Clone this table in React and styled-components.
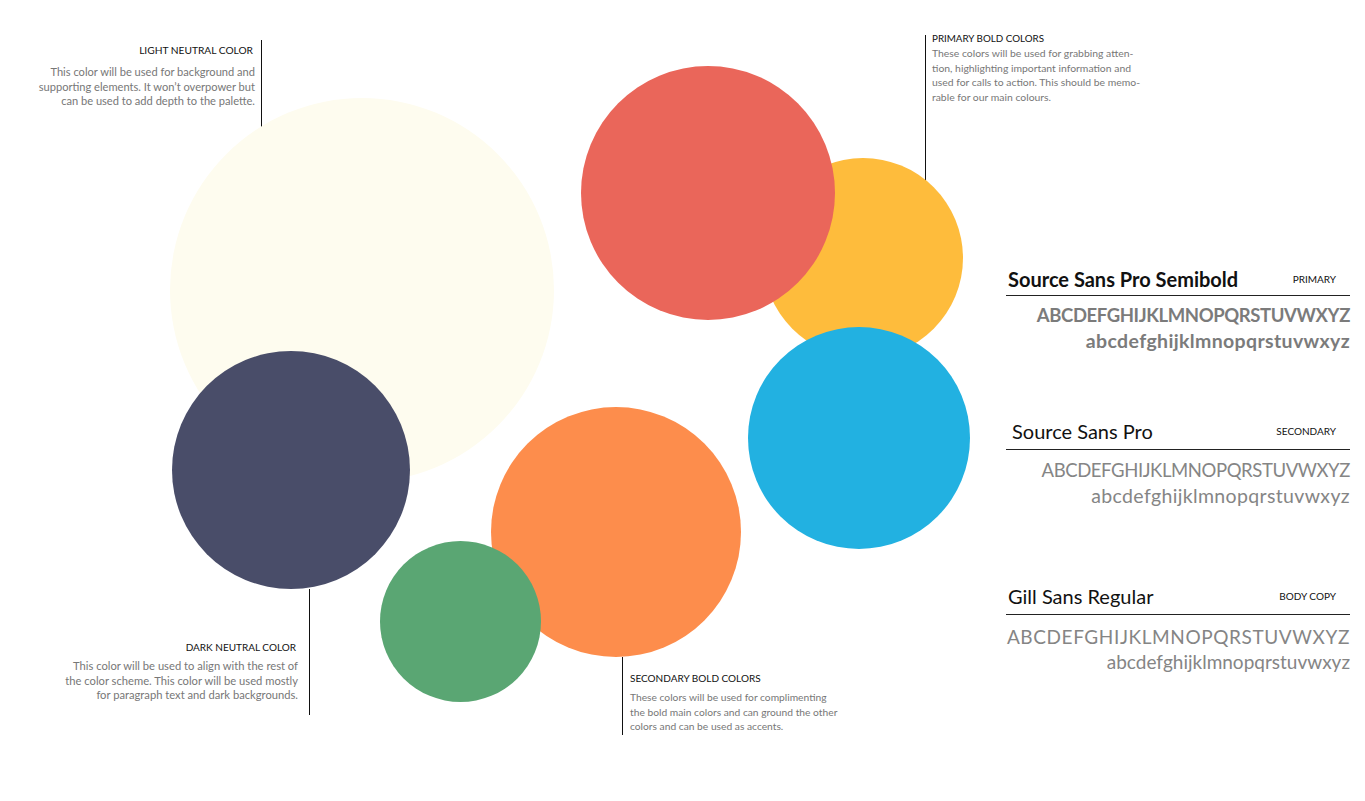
import React from 'react';
import styled, { createGlobalStyle } from 'styled-components';

const GlobalStyle = createGlobalStyle`
  html, body {
    margin: 0;
    padding: 0;
    background: #ffffff;
  }
  body {
    font-family: Lato, 'Liberation Sans', sans-serif;
  }
`;

const circles = [
  { name: 'cream', x: 170, y: 98, d: 384, c: '#fefcef', z: 1 },
  { name: 'navy', x: 172, y: 351, d: 238, c: '#494d69', z: 2 },
  { name: 'yellow', x: 763, y: 158, d: 200, c: '#febc3c', z: 1 },
  { name: 'red', x: 581, y: 66, d: 254, c: '#ea665a', z: 2 },
  { name: 'blue', x: 748, y: 327, d: 222, c: '#22b1e1', z: 3 },
  { name: 'orange', x: 491, y: 407, d: 250, c: '#fd8d4c', z: 1 },
  { name: 'green', x: 380, y: 541, d: 161, c: '#5aa673', z: 2 },
];

// callouts sit on the canvas next to the swatch they describe
const callouts = [
  {
    title: 'LIGHT NEUTRAL COLOR',
    side: 'right',
    x: 20,
    y: 40,
    w: 242,
    h: 87,
    pad: 4,
    gap: 9,
    size: 11.1,
    titleSize: 10.2,
    inset: 6,
    lines: [
      'This color will be used for background and',
      'supporting elements. It won\u2019t overpower but',
      'can be used to add depth to the palette.',
    ],
  },
  {
    title: 'DARK NEUTRAL COLOR',
    side: 'right',
    x: 30,
    y: 589,
    w: 280,
    h: 126,
    pad: 52,
    gap: 6,
    size: 11.2,
    titleSize: 10,
    inset: 11,
    lines: [
      'This color will be used to align with the rest of',
      'the color scheme. This color will be used mostly',
      'for paragraph text and dark backgrounds.',
    ],
  },
  {
    title: 'PRIMARY BOLD COLORS',
    side: 'left',
    x: 925,
    y: 35,
    w: 250,
    h: 148,
    pad: -3,
    gap: 2,
    size: 10.4,
    titleSize: 9.8,
    inset: 6,
    lines: [
      'These colors will be used for grabbing atten-',
      'tion, highlighting important information and',
      'used for calls to action. This should be memo-',
      'rable for our main colours.',
    ],
  },
  {
    title: 'SECONDARY BOLD COLORS',
    side: 'left',
    x: 622,
    y: 657,
    w: 250,
    h: 78,
    pad: 15,
    gap: 6,
    size: 10.25,
    titleSize: 10,
    inset: 7,
    lines: [
      'These colors will be used for complimenting',
      'the bold main colors and can ground the other',
      'colors and can be used as accents.',
    ],
  },
];

const fonts = [
  {
    name: 'Source Sans Pro Semibold',
    tag: 'PRIMARY',
    variant: 'semibold',
    offset: 0,
    headPad: 4,
    sampleTop: 7,
    upper: { size: 18.5, ls: -0.4 },
    lower: { size: 19.5, ls: 0.35 },
  },
  {
    name: 'Source Sans Pro',
    tag: 'SECONDARY',
    variant: 'regular',
    offset: 66,
    headPad: 6,
    sampleTop: 8,
    upper: { size: 18.5, ls: -0.4 },
    lower: { size: 19.5, ls: 0.35 },
  },
  {
    name: 'Gill Sans Regular',
    tag: 'BODY COPY',
    variant: 'gill',
    offset: 76,
    headPad: 6,
    sampleTop: 9,
    upper: { size: 19, ls: 0.6 },
    lower: { size: 19, ls: 0 },
  },
];

const App = () => {
  return (
    <>
      <GlobalStyle />
      <Page>
        {/* FREE CANVAS OF COLOUR SWATCHES */}
        <Canvas>
          {circles.map((dot) => (
            <Dot
              key={dot.name}
              $x={dot.x}
              $y={dot.y}
              $d={dot.d}
              $color={dot.c}
              $z={dot.z}
            />
          ))}
          {callouts.map((note) => (
            <Callout
              key={note.title}
              $side={note.side}
              $x={note.x}
              $y={note.y}
              $w={note.w}
              $h={note.h}
              $inset={note.inset}
            >
              <CalloutTitle
                $pad={note.pad}
                $gap={note.gap}
                $size={note.titleSize}
                $side={note.side}
              >
                {note.title}
              </CalloutTitle>
              <CalloutText $size={note.size}>
                {note.lines.map((line) => (
                  <span key={line}>{line}</span>
                ))}
              </CalloutText>
            </Callout>
          ))}
        </Canvas>
        {/* TYPOGRAPHY COLUMN */}
        <TypePanel>
          {fonts.map((font) => (
            <FontBlock key={font.tag} $offset={font.offset}>
              <FontHeader $variant={font.variant} $pad={font.headPad}>
                <FontName $variant={font.variant}>{font.name}</FontName>
                <FontTag>{font.tag}</FontTag>
              </FontHeader>
              <Sample $variant={font.variant} $top={font.sampleTop}>
                <SampleLine $size={font.upper.size} $ls={font.upper.ls}>
                  ABCDEFGHIJKLMNOPQRSTUVWXYZ
                </SampleLine>
                <SampleLine $size={font.lower.size} $ls={font.lower.ls}>
                  abcdefghijklmnopqrstuvwxyz
                </SampleLine>
              </Sample>
            </FontBlock>
          ))}
        </TypePanel>
      </Page>
    </>
  );
};

const Page = styled.main`
  display: flex;
  width: 1365px;
  height: 801px;
  overflow: hidden;
  background: #ffffff;
`;

const Canvas = styled.section`
  position: relative;
  flex: 0 0 1000px;
  height: 100%;
`;

const Dot = styled.div`
  position: absolute;
  left: ${(p) => p.$x}px;
  top: ${(p) => p.$y}px;
  width: ${(p) => p.$d}px;
  height: ${(p) => p.$d}px;
  border-radius: 50%;
  background: ${(p) => p.$color};
  z-index: ${(p) => p.$z};
`;

const Callout = styled.div`
  position: absolute;
  left: ${(p) => p.$x}px;
  top: ${(p) => p.$y}px;
  width: ${(p) => p.$w}px;
  height: ${(p) => p.$h}px;
  box-sizing: border-box;
  display: flex;
  flex-direction: column;
  align-items: ${(p) => (p.$side === 'right' ? 'flex-end' : 'flex-start')};
  text-align: ${(p) => p.$side};
  ${(p) =>
    p.$side === 'right'
      ? `border-right: 1px solid #111; padding-right: ${p.$inset}px;`
      : `border-left: 1px solid #111; padding-left: ${p.$inset}px;`}
`;

const CalloutTitle = styled.h4`
  margin: ${(p) => p.$pad}px 0 ${(p) => p.$gap}px;
  padding-right: ${(p) => (p.$side === 'right' ? 2 : 0)}px;
  font-family: Lato, 'Liberation Sans', sans-serif;
  font-size: ${(p) => p.$size}px;
  font-weight: 400;
  color: #111111;
  line-height: 12px;
  white-space: nowrap;
`;

const CalloutText = styled.p`
  margin: 0;
  display: flex;
  flex-direction: column;
  font-family: Lato, 'Liberation Sans', sans-serif;
  font-size: ${(p) => p.$size}px;
  line-height: 14.6px;
  color: #777777;
  white-space: nowrap;
`;

const TypePanel = styled.section`
  display: flex;
  flex-direction: column;
  width: 344px;
  padding-top: 267px;
  margin-left: 6px;
`;

const FontBlock = styled.div`
  display: flex;
  flex-direction: column;
  margin-top: ${(p) => p.$offset}px;
`;

const FontHeader = styled.div`
  display: flex;
  justify-content: space-between;
  align-items: center;
  padding: 0 14px ${(p) => p.$pad}px
    ${(p) => (p.$variant === 'regular' ? '6px' : '2px')};
  border-bottom: 1.5px solid #222222;
`;

const FontName = styled.h3`
  margin: 0;
  font-family: Lato, 'Liberation Sans', sans-serif;
  font-size: 20px;
  line-height: 24px;
  font-weight: ${(p) => (p.$variant === 'semibold' ? 700 : 400)};
  color: #111111;
`;

const FontTag = styled.span`
  font-family: Lato, 'Liberation Sans', sans-serif;
  font-size: 10px;
  color: #111111;
`;

const Sample = styled.div`
  display: flex;
  flex-direction: column;
  align-items: flex-end;
  padding-top: ${(p) => p.$top}px;
  font-family: Lato, 'Liberation Sans', sans-serif;
  line-height: 25px;
  font-weight: ${(p) => (p.$variant === 'semibold' ? 700 : 400)};
  color: ${(p) => (p.$variant === 'semibold' ? '#7b7b7b' : '#858585')};
`;

const SampleLine = styled.span`
  font-size: ${(p) => p.$size}px;
  letter-spacing: ${(p) => p.$ls}px;
`;

export default App;
